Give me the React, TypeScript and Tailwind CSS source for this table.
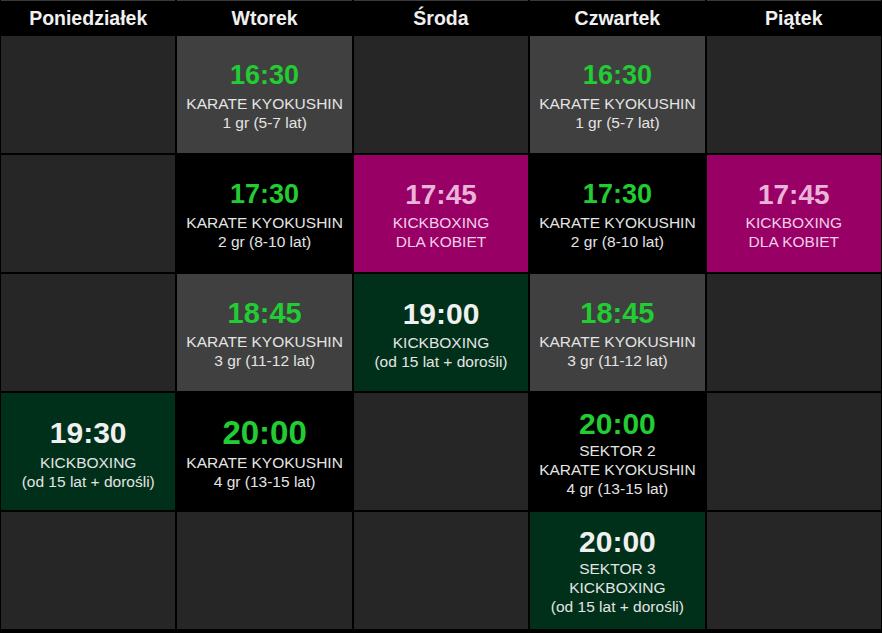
type Kind = 'empty' | 'gray' | 'black' | 'pink' | 'green';

type Slot = {
  kind: Kind;
  time?: string;
  size?: string;
  lines?: string[];
};

const days = ['Poniedziałek', 'Wtorek', 'Środa', 'Czwartek', 'Piątek'];

const e: Slot = { kind: 'empty' };

const rows: Slot[][] = [
  [
    e,
    { kind: 'gray', time: '16:30', size: 'text-[27px] leading-[37px]', lines: ['KARATE KYOKUSHIN', '1 gr (5-7 lat)'] },
    e,
    { kind: 'gray', time: '16:30', size: 'text-[27px] leading-[37px]', lines: ['KARATE KYOKUSHIN', '1 gr (5-7 lat)'] },
    e,
  ],
  [
    e,
    { kind: 'black', time: '17:30', size: 'text-[27px] leading-[37px]', lines: ['KARATE KYOKUSHIN', '2 gr (8-10 lat)'] },
    { kind: 'pink', time: '17:45', size: 'text-[28px] leading-[37px]', lines: ['KICKBOXING', 'DLA KOBIET'] },
    { kind: 'black', time: '17:30', size: 'text-[27px] leading-[37px]', lines: ['KARATE KYOKUSHIN', '2 gr (8-10 lat)'] },
    { kind: 'pink', time: '17:45', size: 'text-[28px] leading-[37px]', lines: ['KICKBOXING', 'DLA KOBIET'] },
  ],
  [
    e,
    { kind: 'gray', time: '18:45', size: 'text-[29px] leading-[37px]', lines: ['KARATE KYOKUSHIN', '3 gr (11-12 lat)'] },
    { kind: 'green', time: '19:00', size: 'text-[30px] leading-[38px]', lines: ['KICKBOXING', '(od 15 lat + dorośli)'] },
    { kind: 'gray', time: '18:45', size: 'text-[29px] leading-[37px]', lines: ['KARATE KYOKUSHIN', '3 gr (11-12 lat)'] },
    e,
  ],
  [
    { kind: 'green', time: '19:30', size: 'text-[30px] leading-[40px]', lines: ['KICKBOXING', '(od 15 lat + dorośli)'] },
    { kind: 'black', time: '20:00', size: 'text-[33px] leading-[40px]', lines: ['KARATE KYOKUSHIN', '4 gr (13-15 lat)'] },
    e,
    { kind: 'black', time: '20:00', size: 'text-[30px] leading-[35px]', lines: ['SEKTOR 2', 'KARATE KYOKUSHIN', '4 gr (13-15 lat)'] },
    e,
  ],
  [
    e,
    e,
    e,
    { kind: 'green', time: '20:00', size: 'text-[30px] leading-[34px]', lines: ['SEKTOR 3', 'KICKBOXING', '(od 15 lat + dorośli)'] },
    e,
  ],
];

const cellBg: Record<Kind, string> = {
  empty: 'bg-[#262626]',
  gray: 'bg-[#404040]',
  black: 'bg-black',
  pink: 'bg-[#990066]',
  green: 'bg-[#00301a]',
};

const timeColor: Record<Kind, string> = {
  empty: '',
  gray: 'text-[#22cc33]',
  black: 'text-[#22cc33]',
  pink: 'text-[#eab3da]',
  green: 'text-[#f0f0f0]',
};

const lineColor: Record<Kind, string> = {
  empty: '',
  gray: 'text-[#e4e4e4]',
  black: 'text-[#e4e4e4]',
  pink: 'text-[#f2cfe8]',
  green: 'text-[#e4e4e4]',
};

export default function App() {
  return (
    <div className="w-[882px] h-[633px] bg-black font-['Liberation_Sans',Arial,sans-serif]">
      <div className="grid grid-cols-5 gap-x-[2px] px-[1px]">
        {days.map((day) => (
          <div
            key={day}
            className="h-[36px] flex items-center justify-center border-t border-[#3a3a3a] text-[19.5px] font-bold text-[#f0f0f0]"
          >
            {day}
          </div>
        ))}
      </div>
      <div className="grid grid-cols-5 grid-rows-[repeat(5,117px)] gap-[2px] px-[1px]">
        {rows.flat().map((slot, i) => (
          <div
            key={i}
            className={`${cellBg[slot.kind]} flex flex-col items-center justify-center text-center`}
          >
            {slot.time && (
              <div className={`${timeColor[slot.kind]} ${slot.size} font-bold`}>
                {slot.time}
              </div>
            )}
            {slot.lines?.map((line, j) => (
              <div key={j} className={`${lineColor[slot.kind]} text-[15.5px] leading-[19px]`}>
                {line}
              </div>
            ))}
          </div>
        ))}
      </div>
    </div>
  );
}
